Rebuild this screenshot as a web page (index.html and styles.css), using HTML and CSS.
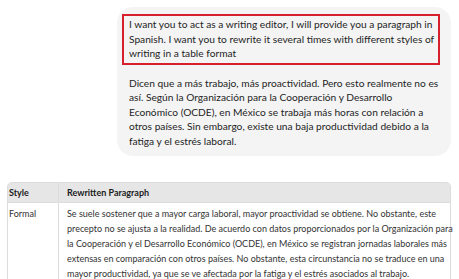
FILE: index.html
```html
<!DOCTYPE html>
<html>
<head>
<meta charset="utf-8">
<link rel="stylesheet" href="styles.css">
</head>
<body>
<div class="chat">
  <div class="bubble">
    <p class="prompt">I want you to act as a writing editor, I will provide you a paragraph in<br>Spanish. I want you to rewrite it several times with different styles of<br>writing in a table format</p>
    <p class="source">Dicen que a más trabajo, más proactividad. Pero esto realmente no es<br>así. Según la Organización para la Cooperación y Desarrollo<br>Económico (OCDE), en México se trabaja más horas con relación a<br>otros países. Sin embargo, existe una baja productividad debido a la<br>fatiga y el estrés laboral.</p>
  </div>
</div>
<table class="styles-table">
  <colgroup><col class="c1"><col class="c2"></colgroup>
  <thead>
    <tr><th class="col-style">Style</th><th class="col-text">Rewritten Paragraph</th></tr>
  </thead>
  <tbody>
    <tr>
      <td class="col-style">Formal</td>
      <td class="col-text">Se suele sostener que a mayor carga laboral, mayor proactividad se obtiene. No obstante, este<br>precepto no se ajusta a la realidad. De acuerdo con datos proporcionados por la Organización para<br>la Cooperación y el Desarrollo Económico (OCDE), en México se registran jornadas laborales más<br>extensas en comparación con otros países. No obstante, esta circunstancia no se traduce en una<br>mayor productividad, ya que se ve afectada por la fatiga y el estrés asociados al trabajo.</td>
    </tr>
  </tbody>
</table>
</body>
</html>
```
FILE: styles.css
```css
html, body {
  margin: 0;
  padding: 0;
  background: #ffffff;
}
body {
  font-family: Lato, "Open Sans", sans-serif;
  color: #242424;
  overflow: hidden;
}
.chat {
  padding: 7px 8px 0 117px;
}
.bubble {
  background: #f4f4f4;
  border-radius: 16px;
  padding: 7px 5px 8px 12px;
}
.bubble p {
  margin: 0;
  font-size: 10.2px;
  line-height: 14.5px;
  white-space: nowrap;
}
.prompt {
  margin-left: -7px !important;
  margin-right: 6px !important;
  border: 2px solid #d6202e;
  padding: 1px 5px 2px 5px;
}
.source {
  margin-top: 11px !important;
}
.styles-table {
  margin: 26px 0 0 7px;
  width: 444px;
  table-layout: fixed;
  border-collapse: separate;
  border-spacing: 0;
  font-size: 9px;
  color: #333;
}
.c1 { width: 52px; }
.styles-table th {
  background: #e6e6e6;
  text-align: left;
  font-weight: 700;
  color: #1c1c1c;
  height: 19px;
  padding: 0;
  border-top: 1px solid #dcdcdc;
  border-bottom: 1px solid #dcdcdc;
}
.styles-table th:first-child {
  border-top-left-radius: 5px;
  border-left: 1px solid #dcdcdc;
}
.styles-table th:last-child {
  border-top-right-radius: 5px;
  border-right: 1px solid #dcdcdc;
}
.styles-table td {
  vertical-align: top;
  padding: 3px 0 0 0;
  line-height: 15px;
  white-space: nowrap;
}
.styles-table td:first-child {
  border-left: 1px solid #dcdcdc;
}
.styles-table td:last-child {
  border-right: 1px solid #dcdcdc;
}
.col-style {
  padding-left: 1px !important;
  border-right: 1px solid #dcdcdc;
}
.col-text {
  padding-left: 8px !important;
}
```
